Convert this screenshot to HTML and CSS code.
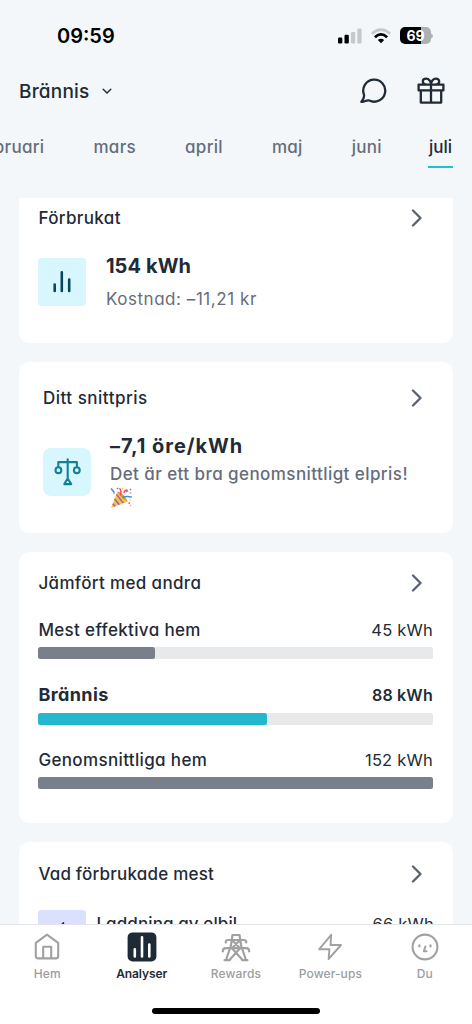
FILE: index.html
```html
<!DOCTYPE html>
<html lang="sv">
<head>
<meta charset="utf-8">
<title>Analyser</title>
<link rel="stylesheet" href="styles.css">
</head>
<body>
<div class="app">
  <div class="status">
    <span class="time">09:59</span>
    <div class="indicators">
      <svg width="24" height="16" viewBox="0 0 24 16"><rect x="0" y="9.5" width="4.3" height="6" rx="1.2"/><rect x="6.5" y="6.8" width="4.3" height="8.7" rx="1.2"/><rect x="12.9" y="4" width="4.3" height="11.5" rx="1.2" fill="#c6c8ca"/><rect x="19.3" y=".5" width="4.3" height="15" rx="1.2" fill="#c6c8ca"/></svg>
      <svg class="wifi" width="20" height="16" viewBox="0 0 20 16" fill="none"><path d="M.8 5.8Q10-2.4 19.2 5.8" stroke="#c6c8ca" stroke-width="2.6"/><path d="M3.9 9.2Q10 3.6 16.1 9.2" stroke="#000" stroke-width="2.8"/><path d="M6.8 12q3.2-2.6 6.4 0l-3.2 3.2z" fill="#000"/></svg>
      <div class="battery"><span>69</span></div>
      <svg width="2" height="6" viewBox="0 0 2 6"><path d="M0 .5Q2 1.5 2 3T0 5.5z" fill="#b0b2b4"/></svg>
    </div>
  </div>

  <header class="header">
    <span class="home-name">Brännis</span>
    <svg class="down" width="10" height="7" viewBox="0 0 10 7"><path d="M1.2 1.2 5 5l3.8-3.8"/></svg>
    <div class="actions">
      <svg width="28" height="28" viewBox="0 0 28 28"><path d="M5 17.7A11 11 0 1 1 10.3 23.5C7.5 22.6 5.5 25.3 2.4 24.8 4.4 22.6 5.4 20.5 5 17.7Z"/></svg>
      <svg width="28" height="28" viewBox="0 0 28 28"><path d="M1.6 7.6h24.8v5.8H1.6zM3.8 13.4h20.4v12.2H3.8zM14 7.6v18M14 7.6C10 7.6 5.8 7.8 5.8 4.6 5.8 2.6 7.4 1.6 9 1.6c3 0 5 3 5 6ZM14 7.6c4 0 8.2.2 8.2-3 0-2-1.6-3-3.2-3-3 0-5 3-5 6Z"/></svg>
    </div>
  </header>

  <nav class="months">
    <span>februari</span><span>mars</span><span>april</span><span>maj</span><span>juni</span><span class="active">juli</span>
  </nav>

  <main class="content">
    <section class="card used">
      <div class="card-head"><h2>Förbrukat</h2><svg class="chev" width="12" height="18" viewBox="0 0 12 18"><path d="M2 1.5 9.5 9 2 16.5"/></svg></div>
      <div class="summary">
        <div class="tile"><svg width="48" height="48" viewBox="0 0 48 48"><path class="bars" d="M16.7 26.5V33M23.8 14.3V33M31.2 21.5V33"/></svg></div>
        <div class="info"><strong class="amount">154 kWh</strong><span class="cost">Kostnad: –11,21 kr</span></div>
      </div>
    </section>

    <section class="card price">
      <div class="card-head"><h2>Ditt snittpris</h2><svg class="chev" width="12" height="18" viewBox="0 0 12 18"><path d="M2 1.5 9.5 9 2 16.5"/></svg></div>
      <div class="summary">
        <div class="tile"><svg width="48" height="48" viewBox="0 0 48 48"><path class="scale" d="M24.7 11.2v19M15.3 18.8v-4.7h18.6v4.7M24.7 30.5l-3.4 5.6h6.9z"/><circle class="scale" cx="15.4" cy="22.2" r="2.9"/><circle class="scale" cx="33.8" cy="22.2" r="2.9"/></svg></div>
        <div class="info"><strong class="amount">–7,1 öre/kWh</strong><span class="verdict">Det är ett bra genomsnittligt elpris!</span>
          <svg class="party" width="22" height="22" viewBox="0 0 22 22" fill="none">
            <path d="M7.5 4.5 1 21 17.7 14.5Q15 7 7.5 4.5Z" fill="#f3c545"/>
            <path d="m6.4 7.4 7 8.7M4.6 12l4.8 5.8M2.8 16.7 5.3 19.5" stroke="#a95bb8" stroke-width="1.5"/>
            <path d="M7.5 4.5q4.8 0 10.2 10-6.6-2.5-10.2-10Z" fill="#d9a02c"/>
            <path d="M10.3 8.5Q12 4 9.5 1.2M14 6q.5-3 3.3-3.3" stroke="#ef4968" stroke-width="1.5"/>
            <path d="M12.5 10.5Q16 8.7 21.8 10M1 1.5l2 2.2 1.5 2M16 5l2-1.5" stroke="#448ee0" stroke-width="1.5"/>
            <path d="m20 2 1 1M7 1l1 1m12.5 3.5v1M18.5 16l1.5.3" stroke="#ed4c74" stroke-width="1.5"/>
            <path d="M3.2 6.5h1.5M19.7 13h1M20 18.5h1.3M12 1.5h1" stroke="#efb83d" stroke-width="1.5"/>
          </svg>
        </div>
      </div>
    </section>

    <section class="card compare">
      <div class="card-head"><h2>Jämfört med andra</h2><svg class="chev" width="12" height="18" viewBox="0 0 12 18"><path d="M2 1.5 9.5 9 2 16.5"/></svg></div>
      <div class="row"><div class="labels"><span>Mest effektiva hem</span><span class="val">45 kWh</span></div><div class="track"><div class="fill" style="width:29.6%"></div></div></div>
      <div class="row own"><div class="labels"><span class="name">Brännis</span><span class="val">88 kWh</span></div><div class="track"><div class="fill" style="width:57.9%"></div></div></div>
      <div class="row"><div class="labels"><span>Genomsnittliga hem</span><span class="val">152 kWh</span></div><div class="track"><div class="fill" style="width:100%"></div></div></div>
    </section>

    <section class="card most">
      <div class="card-head"><h2>Vad förbrukade mest</h2><svg class="chev" width="12" height="18" viewBox="0 0 12 18"><path d="M2 1.5 9.5 9 2 16.5"/></svg></div>
      <div class="device"><div class="tile violet"><svg width="48" height="48" viewBox="0 0 48 48"><path d="M25.3 13 15 25.5h8l-1 10 11-14.5h-8z" fill="none" stroke="#1f1aa8" stroke-width="1.8" stroke-linejoin="round"/></svg></div><span class="device-name">Laddning av elbil</span><span class="val">66 kWh</span></div>
    </section>
  </main>

  <footer class="tabbar">
    <div class="tabs">
      <div class="tab"><svg width="30" height="30" viewBox="0 0 30 30"><path d="M3.8 10.8 15 2.6l11.2 8.2V24.2a2.2 2.2 0 0 1-2.2 2.2H6a2.2 2.2 0 0 1-2.2-2.2ZM11.2 26.4V14.8h8v11.6"/></svg><span>Hem</span></div>
      <div class="tab current"><svg width="30" height="30" viewBox="0 0 30 30"><rect x=".6" y=".4" width="28.8" height="29" rx="5" fill="#1e2a36" stroke="none"/><path d="M7.8 17.4v7M15 5.3v19.1M22.3 12.6v11.8" stroke="#fff" stroke-width="2.6"/></svg><span>Analyser</span></div>
      <div class="tab"><svg class="pylon" width="30" height="30" viewBox="0 0 30 30"><path d="M11.5 3h7M11.5 3 9.8 14 5 28M18.5 3l1.7 11L25 28M4.7 10.5q0-2.5 2.5-2.5h15.6q2.5 0 2.5 2.5M1.8 19.5q0-3.3 3.2-3.3h20q3.2 0 3.2 3.3M11 8l8 8.2L8.5 28M19 8l-8 8.2L21.5 28M3.6 28.2h5.2M21.2 28.2h5.2"/></svg><span>Rewards</span></div>
      <div class="tab"><svg width="30" height="30" viewBox="0 0 30 30"><path d="M16.2 2.8 4.2 17.2h10.2L13.6 27 26 13H15.5Z" stroke-width="1.9"/></svg><span>Power-ups</span></div>
      <div class="tab"><svg width="30" height="30" viewBox="0 0 30 30"><circle cx="15" cy="15" r="12.4"/><path d="M15.4 14.5 13.8 19.3h2.8" stroke-width="2"/><path d="M9.4 13.4v1M20.5 13.4v1" stroke-width="2.2"/></svg><span>Du</span></div>
    </div>
    <div class="home-bar"></div>
  </footer>
</div>
</body>
</html>
```

FILE: styles.css
```css
* { box-sizing: border-box; }
body { margin: 0; background: #f3f7fa; color: #1f2b37; font-family: Inter, "Noto Sans", sans-serif; font-feature-settings: "cv11" 1; }
svg { display: block; flex: none; }
h2 { margin: 0; font-size: 17px; font-weight: 450; line-height: 20px; letter-spacing: .35px; }
.app { width: 472px; height: 1024px; display: flex; flex-direction: column; overflow: hidden; }

.status { height: 64px; padding: 7px 39px 0 57px; display: flex; align-items: center; justify-content: space-between; color: #000; }
.time { font-size: 20px; font-weight: 600; letter-spacing: 0; }
.indicators { display: flex; align-items: center; }
.wifi { margin: 0 9px 0 9px; }
.battery { width: 31px; height: 17px; border-radius: 5px; background: linear-gradient(90deg, #000 69%, #adb0b3 69%); color: #fff; display: flex; align-items: center; justify-content: center; font-size: 14px; font-weight: 700; line-height: 17px; }

.header { height: 54px; padding: 0 27px 0 19px; display: flex; align-items: center; }
.home-name { font-size: 19px; font-weight: 500; letter-spacing: .2px; }
.down { margin-left: 12px; fill: none; stroke: #1f2b37; stroke-width: 1.4; stroke-linecap: round; }
.actions { margin-left: auto; display: flex; gap: 30px; fill: none; stroke: #1f2b37; stroke-width: 2.3; stroke-linejoin: round; }

.months { height: 80px; padding: 16px 19px 0 0; display: flex; justify-content: flex-end; gap: 49px; font-size: 17px; font-weight: 450; line-height: 26px; letter-spacing: .3px; color: #656d7d; }
.active { height: 34px; color: #1f2b37; font-weight: 500; border-bottom: 2px solid #20bfd4; padding: 0 1px; margin-left: -3px; letter-spacing: 0; }

.content { height: 726px; padding: 0 19px; overflow: hidden; display: flex; flex-direction: column; gap: 19.3px; }
.card { flex: none; background: #fff; border-radius: 10px; padding: 0 19px 0 19.4px; }
.card-head { display: flex; align-items: center; justify-content: space-between; height: 20px; padding-right: 11px; }
.chev { fill: none; stroke: #596273; stroke-width: 2.3; stroke-linecap: round; stroke-linejoin: round; }
.summary { display: flex; }
.tile { width: 48px; height: 48px; border-radius: 4px; background: #d7f6fe; flex: none; }
.bars { stroke: #07485b; stroke-width: 2.6; stroke-linecap: round; }
.scale { fill: none; stroke: #138197; stroke-width: 2.1; stroke-linecap: round; stroke-linejoin: round; }
.info { display: flex; flex-direction: column; align-items: flex-start; white-space: nowrap; }
.amount { font-size: 20px; font-weight: 700; line-height: 26px; letter-spacing: .1px; }

.used { height: 144.5px; border-radius: 0 0 10px 10px; padding-top: 10px; }
.used .summary { margin-top: 30px; gap: 19.5px; }
.used .info { margin-top: -5px; }
.cost { margin-top: 7px; font-size: 17px; line-height: 26px; letter-spacing: .55px; color: #656d7d; }

.price { height: 171px; padding-top: 26px; }
.price .card-head { padding-left: 4.6px; }
.price h2 { letter-spacing: .5px; }
.price .summary { margin-top: 25px; padding-left: 4.6px; gap: 19px; }
.price .tile { margin-top: 15px; border-radius: 8px; }
.price .amount { letter-spacing: .95px; }
.verdict { margin-top: 2px; font-size: 17px; font-weight: 450; line-height: 26px; letter-spacing: .43px; color: #656d7d; }

.compare { height: 270.8px; padding-top: 21.4px; }
.row { margin-top: 26.4px; }
.labels { display: flex; justify-content: space-between; width: 394.5px; font-size: 17px; font-weight: 450; line-height: 20px; letter-spacing: .35px; }
.val { font-size: 16.5px; font-weight: 400; letter-spacing: .2px; }
.track { margin-top: 7px; height: 12px; width: 395px; border-radius: 2.5px; background: #e7e9ea; }
.fill { height: 12px; border-radius: 2.5px; background: #797f8b; }
.own { margin-top: 26px; }
.own .fill { background: #23b8ce; }
.own .name { font-size: 18px; font-weight: 700; letter-spacing: .4px; }
.own .val { font-size: 16px; font-weight: 600; }
.own .track { margin-top: 8px; }
.own + .row { margin-top: 25px; }

.most { height: 170px; padding-top: 21.4px; }
.most h2 { letter-spacing: .2px; }
.device { display: flex; margin-top: 26px; line-height: 28px; }
.violet { background: #d9e1fe; }
.device-name { margin-left: 10px; font-size: 17px; font-weight: 450; letter-spacing: .1px; flex: 1; }

.tabbar { height: 100px; flex: none; background: #fff; border-top: 1px solid #e3e5e7; display: flex; flex-direction: column; align-items: center; position: relative; }
.tabs { width: 472px; display: grid; grid-template-columns: repeat(5, 94.4px); padding-top: 7px; }
.tab { display: flex; flex-direction: column; align-items: center; color: #9b9d9f; font-size: 12px; font-weight: 500; letter-spacing: .1px; line-height: 16px; gap: 4px; font-feature-settings: normal; }
.tab svg { fill: none; stroke: #a1a1a1; stroke-width: 2.1; stroke-linecap: round; stroke-linejoin: round; }
.tab .pylon { stroke-width: 2.2; }
.current { color: #1f2b37; font-weight: 600; letter-spacing: -.1px; }
.home-bar { margin-top: 26px; width: 168px; height: 6px; border-radius: 3px; background: #000; }
```
